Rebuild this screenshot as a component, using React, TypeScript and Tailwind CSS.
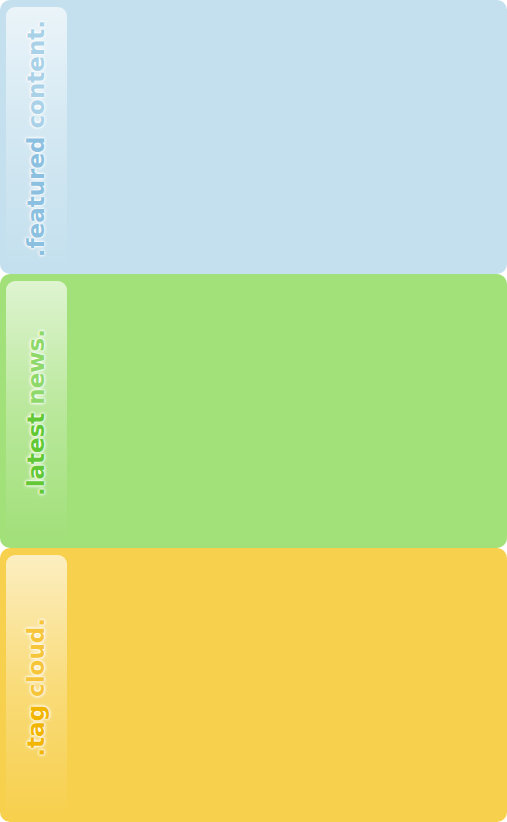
const panels = [
  {
    key: 'featured',
    first: '.featured',
    rest: ' content.',
    bg: 'bg-[#c4e0ee]',
    firstColor: 'text-[#8cc0e0]',
    restColor: 'text-[#a9d1e8]',
  },
  {
    key: 'news',
    first: '.latest',
    rest: ' news.',
    bg: 'bg-[#a2e07a]',
    firstColor: 'text-[#62c935]',
    restColor: 'text-[#8fd96a]',
  },
  {
    key: 'tags',
    first: '.tag',
    rest: ' cloud.',
    bg: 'bg-[#f7d04e]',
    firstColor: 'text-[#f2b500]',
    restColor: 'text-[#f6c53a]',
  },
];

export default function App() {
  return (
    <div className="flex flex-col w-[507px] h-[822px] font-['DejaVu_Sans','Verdana',sans-serif]">
      {panels.map(p => (
        <section key={p.key} className={`h-[274px] rounded-[10px] pl-[6px] pt-[7px] pb-[7px] ${p.bg}`}>
          <div className="w-[61px] h-full rounded-[9px] bg-gradient-to-b from-white/65 via-white/25 to-white/0 flex items-center justify-center pt-[4px]">
            <h2 className="[writing-mode:vertical-rl] rotate-180 text-[23px] font-bold leading-none whitespace-nowrap [text-shadow:0_0_4px_#fff,0_0_3px_#fff,0_0_2px_#fff]">
              <span className={p.firstColor}>{p.first}</span>
              <span className={p.restColor}>{p.rest}</span>
            </h2>
          </div>
        </section>
      ))}
    </div>
  );
}
